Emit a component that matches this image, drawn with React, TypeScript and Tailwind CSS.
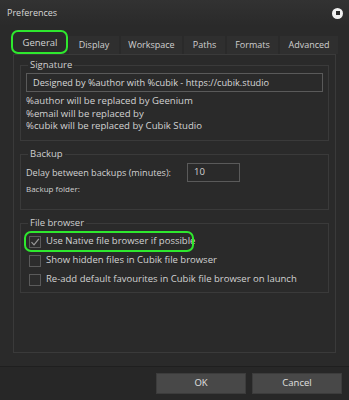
const font = { fontFamily: '"Open Sans", "DejaVu Sans", sans-serif' };

function Group({ title, children, className }: { title: string; children: React.ReactNode; className?: string }) {
  return (
    <div className={"relative border border-[#3a3a3a] " + (className ?? "")}>
      <span className="absolute -top-[7px] left-[7px] bg-[#2a2a2a] px-[2px] text-[9.5px] leading-[12px] text-[#cfcfcf]">
        {title}
      </span>
      {children}
    </div>
  );
}

function Check({ label, checked, highlight }: { label: string; checked?: boolean; highlight?: boolean }) {
  return (
    <div className="relative flex h-[19px] items-center gap-[5px] pl-[8px]">
      {highlight && (
        <div className="absolute left-[3px] top-[-1px] h-[21px] w-[170px] rounded-[7px] border-2 border-[#2ee82e]" />
      )}
      <div className="flex h-[12px] w-[12px] items-center justify-center border border-[#5a5a5a] bg-[#2c2c2c]">
        {checked && (
          <svg width="10" height="10" viewBox="0 0 10 10">
            <path d="M1.5 5.2 L4 7.8 L8.8 1.8" fill="none" stroke="#9a9a9a" strokeWidth="1.2" />
          </svg>
        )}
      </div>
      <span className="text-[9.5px] text-[#d2d2d2]">{label}</span>
    </div>
  );
}

export default function App() {
  const tabs = ["Display", "Workspace", "Paths", "Formats", "Advanced"];
  const widths = ["w-[50px]", "w-[61px]", "w-[41px]", "w-[51px]", "w-[58px]"];
  return (
    <div style={font} className="flex h-[400px] w-[349px] flex-col overflow-hidden bg-[#2a2a2a] text-[#d2d2d2]">
      {/* title bar */}
      <div className="flex h-[26px] items-center justify-between bg-gradient-to-b from-[#323232] to-[#2a2a2a] pl-[7px] pr-[6px]">
        <span className="text-[9px] text-[#d8d8d8]">Preferences</span>
        <div className="flex h-[11px] w-[11px] items-center justify-center rounded-full bg-[#f0f0f0]">
          <div className="h-[4px] w-[4px] bg-[#2a2a2a]" />
        </div>
      </div>

      {/* tabs */}
      <div className="mt-[9px] flex h-[19px] items-end pl-[13px]">
        <div className="relative flex h-[19px] w-[54px] items-center justify-center text-[9.5px]">
          <div className="absolute left-[-2px] top-[-5px] h-[24px] w-[57px] rounded-[7px] border-2 border-[#2ee82e]" />
          <span className="-mt-[3px]">General</span>
        </div>
        {tabs.map((t, i) => (
          <div
            key={t}
            className={"ml-[2px] flex h-[18px] items-center justify-center bg-[#2f2f2f] text-[9px] text-[#cfcfcf] " + widths[i]}
          >
            {t}
          </div>
        ))}
      </div>

      {/* panel */}
      <div className="mx-[13px] flex h-[299px] flex-col border border-[#3a3a3a] px-[6px] pt-[10px]">
        <Group title="Signature" className="h-[76px] px-[5px] pt-[7px]">
          <div className="flex h-[19px] items-center border border-[#5a5a5a] pl-[6px] text-[9.2px] text-[#d8d8d8]">
            Designed by %author with %cubik - https://cubik.studio
          </div>
          <div className="mt-[3px] flex flex-col text-[9.6px] leading-[12.5px] text-[#d2d2d2]">
            <span>%author will be replaced by Geenium</span>
            <span>%email will be replaced by</span>
            <span>%cubik will be replaced by Cubik Studio</span>
          </div>
        </Group>

        <Group title="Backup" className="mt-[13px] h-[56px] px-[5px] pt-[8px]">
          <div className="flex items-center">
            <span className="w-[161px] text-[9.1px]">Delay between backups (minutes):</span>
            <div className="flex h-[19px] w-[53px] items-center border border-[#5a5a5a] pl-[6px] text-[9.5px]">10</div>
          </div>
          <div className="mt-[1px] text-[8px] text-[#cfcfcf]">Backup folder:</div>
        </Group>

        <Group title="File browser" className="mt-[13px] h-[70px] pt-[8px]">
          <Check label="Use Native file browser if possible" checked highlight />
          <Check label="Show hidden files in Cubik file browser" />
          <Check label="Re-add default favourites in Cubik file browser on launch" />
        </Group>
      </div>

      {/* footer */}
      <div className="mt-[13px] flex flex-1 items-start justify-end gap-[6px] border-t border-[#1f1f1f] bg-[#272727] pr-[7px] pt-[6px]">
        <button className="h-[21px] w-[90px] border border-[#3c3c3c] bg-[#484848] text-[9.5px] text-[#e0e0e0]">OK</button>
        <button className="h-[21px] w-[90px] border border-[#3c3c3c] bg-[#484848] text-[9.5px] text-[#e0e0e0]">Cancel</button>
      </div>
    </div>
  );
}
